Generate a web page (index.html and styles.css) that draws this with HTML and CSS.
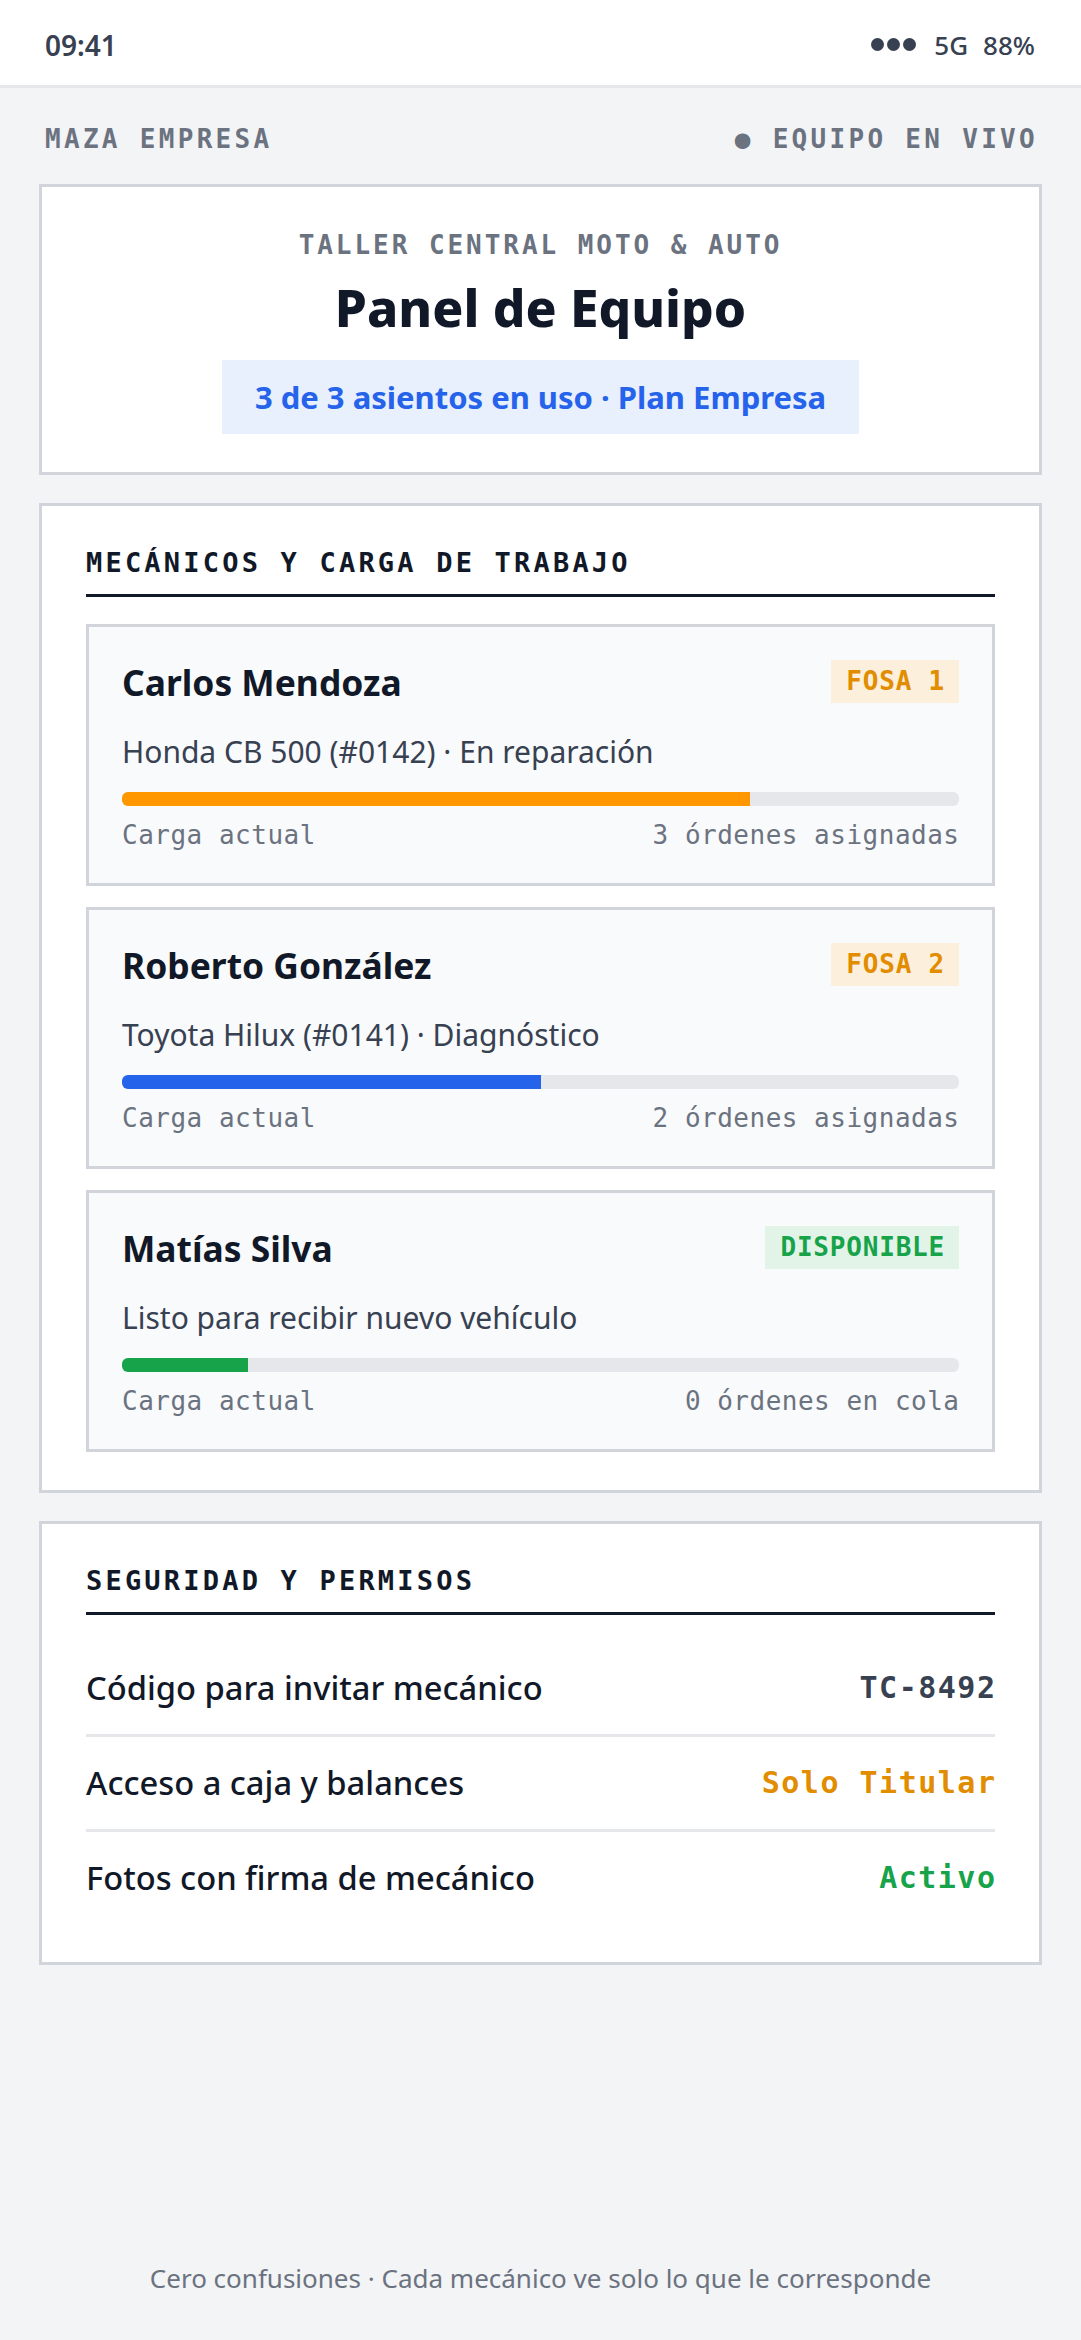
FILE: index.html
```html
<!DOCTYPE html>
<html lang="es">
<head>
<meta charset="utf-8">
<title>Panel de Equipo</title>
<link rel="stylesheet" href="styles.css">
</head>
<body>
  <header class="status">
    <span class="time">09:41</span>
    <div class="status-right">
      <span class="signal"><i></i><i></i><i></i></span>
      <span>5G</span>
      <span>88%</span>
    </div>
  </header>

  <main class="page">
    <div class="topbar">
      <span>MAZA EMPRESA</span>
      <span>● EQUIPO EN VIVO</span>
    </div>

    <section class="card hero">
      <div class="eyebrow">TALLER CENTRAL MOTO &amp; AUTO</div>
      <h1 class="title">Panel de Equipo</h1>
      <div class="seats">3 de 3 asientos en uso · Plan Empresa</div>
    </section>

    <section class="card">
      <h2 class="section-title">MECÁNICOS Y CARGA DE TRABAJO</h2>
      <div class="mech-list">
        <article class="mech">
          <div class="mech-head">
            <span class="mech-name">Carlos Mendoza</span>
            <span class="tag tag-orange">FOSA 1</span>
          </div>
          <p class="mech-desc">Honda CB 500 (#0142) · En reparación</p>
          <div class="bar"><div class="fill fill-orange" style="width:75%"></div></div>
          <div class="mech-foot"><span>Carga actual</span><span>3 órdenes asignadas</span></div>
        </article>
        <article class="mech">
          <div class="mech-head">
            <span class="mech-name">Roberto González</span>
            <span class="tag tag-orange">FOSA 2</span>
          </div>
          <p class="mech-desc">Toyota Hilux (#0141) · Diagnóstico</p>
          <div class="bar"><div class="fill fill-blue" style="width:50%"></div></div>
          <div class="mech-foot"><span>Carga actual</span><span>2 órdenes asignadas</span></div>
        </article>
        <article class="mech">
          <div class="mech-head">
            <span class="mech-name">Matías Silva</span>
            <span class="tag tag-green">DISPONIBLE</span>
          </div>
          <p class="mech-desc">Listo para recibir nuevo vehículo</p>
          <div class="bar"><div class="fill fill-green" style="width:15%"></div></div>
          <div class="mech-foot"><span>Carga actual</span><span>0 órdenes en cola</span></div>
        </article>
      </div>
    </section>

    <section class="card">
      <h2 class="section-title">SEGURIDAD Y PERMISOS</h2>
      <div class="perm-list">
        <div class="perm-row">
          <span class="perm-label">Código para invitar mecánico</span>
          <span class="perm-value val-dark">TC-8492</span>
        </div>
        <div class="perm-row">
          <span class="perm-label">Acceso a caja y balances</span>
          <span class="perm-value val-orange">Solo Titular</span>
        </div>
        <div class="perm-row">
          <span class="perm-label">Fotos con firma de mecánico</span>
          <span class="perm-value val-green">Activo</span>
        </div>
      </div>
    </section>

    <footer class="foot">Cero confusiones · Cada mecánico ve solo lo que le corresponde</footer>
  </main>
</body>
</html>
```

FILE: styles.css
```css
* {
  box-sizing: border-box;
  margin: 0;
  padding: 0;
}

body {
  background: #f3f4f6;
  font-family: "Noto Sans", "Open Sans", sans-serif;
  min-height: 2340px;
  display: flex;
  flex-direction: column;
}

.status {
  height: 88px;
  background: #ffffff;
  border-bottom: 3px solid #e5e7eb;
  display: flex;
  justify-content: space-between;
  align-items: center;
  padding: 4px 46px 0 45px;
  font-size: 26px;
  font-weight: 500;
  color: #374151;
}

.time {
  font-size: 28px;
  font-weight: 600;
}

.status-right {
  display: flex;
  align-items: center;
  gap: 15px;
}

.signal {
  display: flex;
  gap: 3px;
  margin-right: 3px;
}

.signal i {
  width: 13px;
  height: 13px;
  border-radius: 50%;
  background: #374151;
}

.page {
  flex: 1;
  display: flex;
  flex-direction: column;
  padding: 37px 39px 44px;
}

.topbar {
  display: flex;
  justify-content: space-between;
  padding: 0 4px 0 6px;
  font-family: "DejaVu Sans Mono", monospace;
  font-weight: 700;
  font-size: 26px;
  letter-spacing: 3.3px;
  line-height: 28px;
  color: #6b7280;
  margin-bottom: 31px;
}

.card {
  background: #ffffff;
  border: 3px solid #d1d5db;
  padding: 44px 44px 38px;
}

.card + .card {
  margin-top: 28px;
}

.hero {
  text-align: center;
}

.eyebrow {
  font-family: "DejaVu Sans Mono", monospace;
  font-weight: 700;
  font-size: 26px;
  letter-spacing: 2.95px;
  line-height: 28px;
  color: #6b7280;
}

.title {
  margin-top: 18px;
  font-size: 51.4px;
  font-weight: 800;
  line-height: 60px;
  color: #111827;
}

.seats {
  display: inline-block;
  margin-top: 23px;
  background: #e8effd;
  color: #2563eb;
  font-size: 31px;
  font-weight: 700;
  line-height: 74px;
  padding: 0 33px;
}

.section-title {
  font-family: "DejaVu Sans Mono", monospace;
  font-weight: 700;
  font-size: 27px;
  letter-spacing: 3.2px;
  line-height: 26px;
  color: #111827;
  padding-bottom: 18px;
  border-bottom: 3px solid #111827;
}

.mech-list {
  display: flex;
  flex-direction: column;
  gap: 21px;
  margin-top: 27px;
}

.mech {
  background: #f9fafb;
  border: 3px solid #d1d5db;
  padding: 33px;
}

.mech-head {
  display: flex;
  justify-content: space-between;
  align-items: center;
  height: 43px;
}

.mech-name {
  font-size: 35.4px;
  font-weight: 700;
  color: #111827;
}

.tag {
  font-family: "DejaVu Sans Mono", monospace;
  font-weight: 700;
  font-size: 26px;
  letter-spacing: 0.8px;
  line-height: 43px;
  padding: 0 14px 0 15px;
}

.tag-orange {
  background: #fcefdc;
  color: #e28c00;
}

.tag-green {
  background: #e2f3e8;
  color: #16a34a;
}

.mech-desc {
  margin-top: 29px;
  font-size: 30px;
  line-height: 40px;
  color: #374151;
}

.bar {
  margin-top: 20px;
  height: 14px;
  background: #e5e7eb;
  border-radius: 6px;
  overflow: hidden;
}

.fill {
  height: 100%;
}

.fill-orange { background: #ff9800; }
.fill-blue { background: #2563eb; }
.fill-green { background: #16a34a; }

.mech-foot {
  margin-top: 14px;
  display: flex;
  justify-content: space-between;
  font-family: "DejaVu Sans Mono", monospace;
  font-size: 26px;
  letter-spacing: 0.5px;
  line-height: 30px;
  color: #6b7280;
}

.mech-foot span:last-child {
  margin-right: -0.5px;
}

.perm-list {
  margin-top: 27px;
}

.perm-row {
  display: flex;
  justify-content: space-between;
  align-items: center;
  padding: 25px 0;
  line-height: 42px;
  border-bottom: 3px solid #e5e7eb;
}

.perm-row:last-child {
  border-bottom: none;
}

.perm-label {
  font-size: 32.7px;
  font-weight: 500;
  color: #111827;
}

.perm-value {
  font-family: "DejaVu Sans Mono", monospace;
  font-weight: 700;
  font-size: 30px;
  letter-spacing: 1.5px;
  margin-right: -1.5px;
}

.val-dark { color: #374151; }
.val-orange { color: #e28c00; }
.val-green { color: #16a34a; }

.foot {
  margin-top: auto;
  text-align: center;
  font-size: 26px;
  line-height: 36px;
  color: #6b7280;
}
```
